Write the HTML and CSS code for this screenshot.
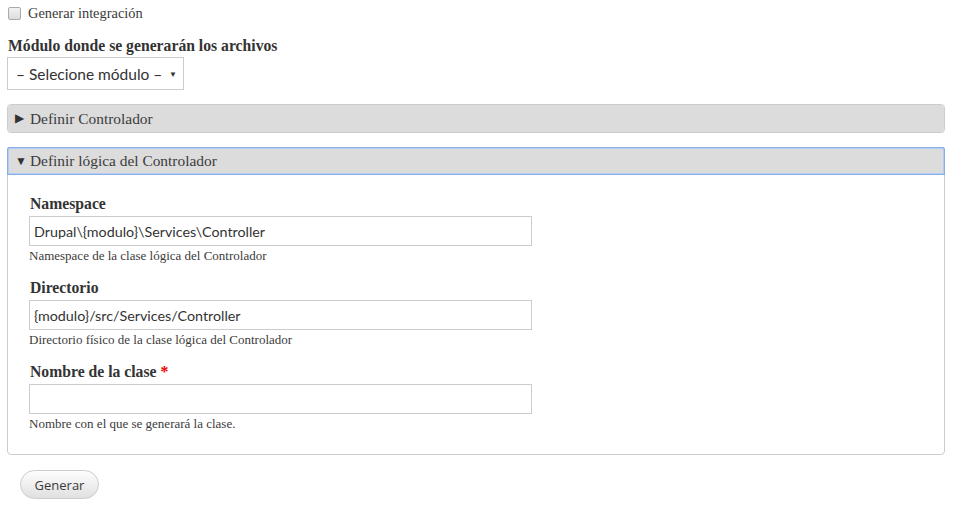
FILE: index.html
```html
<!DOCTYPE html>
<html lang="es">
<head>
<meta charset="utf-8">
<title>Generar integración</title>
<link rel="stylesheet" href="styles.css">
</head>
<body>
<form class="form">
  <div class="check-row">
    <span class="checkbox"></span>
    <span class="check-label">Generar integración</span>
  </div>

  <div class="field field-module">
    <label class="label">Módulo donde se generarán los archivos</label>
    <div class="select">
      <span>– Selecione módulo –</span>
      <span class="caret">▼</span>
    </div>
  </div>

  <div class="details closed">
    <div class="summary"><span class="tri">▶</span>Definir Controlador</div>
  </div>

  <div class="details open">
    <div class="summary focus"><span class="tri">▼</span>Definir lógica del Controlador</div>
    <div class="details-body">
      <div class="field">
        <label class="label">Namespace</label>
        <div class="input">Drupal\{modulo}\Services\Controller</div>
        <div class="desc">Namespace de la clase lógica del Controlador</div>
      </div>
      <div class="field">
        <label class="label">Directorio</label>
        <div class="input">{modulo}/src/Services/Controller</div>
        <div class="desc">Directorio físico de la clase lógica del Controlador</div>
      </div>
      <div class="field">
        <label class="label">Nombre de la clase <span class="req">*</span></label>
        <div class="input"></div>
        <div class="desc">Nombre con el que se generará la clase.</div>
      </div>
    </div>
  </div>

  <div class="actions">
    <button type="button" class="button">Generar</button>
  </div>
</form>
</body>
</html>
```

FILE: styles.css
```css
html, body {
  margin: 0;
  padding: 0;
  background: #fff;
}
body {
  font-family: "Liberation Serif", Georgia, serif;
  color: #3b3b3b;
}
.form {
  padding: 6px 20px 0 7px;
  width: 938px;
}
.check-row {
  display: flex;
  align-items: center;
  height: 14px;
  padding-left: 1px;
}
.checkbox {
  width: 11px;
  height: 11px;
  border: 1px solid #a9a9a9;
  border-radius: 2px;
  background: linear-gradient(#f2f2f2, #dcdcdc);
}
.check-label {
  margin-left: 7px;
  font-size: 14.4px;
  color: #3b3b3b;
}
.field-module {
  margin-top: 18px;
}
.label {
  display: block;
  font-weight: bold;
  font-size: 15.7px;
  line-height: 16px;
  color: #333;
  padding-left: 1px;
}
.select {
  margin-top: 3px;
  box-sizing: border-box;
  width: 177px;
  height: 33px;
  border: 1px solid #ccc;
  display: flex;
  align-items: center;
  justify-content: space-between;
  padding: 0 4px 0 8px;
  font-family: Lato, sans-serif;
  font-size: 15.5px;
  color: #333;
}
.caret {
  font-size: 8px;
  color: #333;
  margin-right: 2px;
}
.details {
  border: 1px solid #ccc;
  border-radius: 4px;
  margin-top: 14px;
}
.summary {
  background: #dcdcdc;
  height: 27px;
  display: flex;
  align-items: center;
  padding-left: 7px;
  font-size: 15.4px;
  color: #3b3b3b;
}
.details.closed .summary {
  border-radius: 3px;
}
.summary.focus {
  box-shadow: inset 0 0 0 1px #8aaee8, inset 0 0 0 2px #b5cdf2;
  margin: -1px -1px 0 -1px;
  height: 28px;
  padding-left: 8px;
  border-radius: 3px 3px 0 0;
}
.tri {
  font-size: 12px;
  margin-right: 6px;
  color: #333;
  width: 9px;
  display: inline-block;
}
.details-body {
  padding: 21px 21px 23px 21px;
}
.field + .field {
  margin-top: 17px;
}
.input {
  box-sizing: border-box;
  width: 503px;
  height: 30px;
  border: 1px solid #ccc;
  margin-top: 4px;
  padding: 0 4px;
  display: flex;
  align-items: center;
  font-family: Lato, sans-serif;
  font-size: 14.3px;
  color: #333;
}
.desc {
  font-size: 13px;
  margin-top: 3px;
  color: #3b3b3b;
  line-height: 14px;
}
.req {
  color: #e00;
}
.actions {
  padding: 15px 0 0 13px;
}
.button {
  width: 79px;
  height: 29px;
  border: 1px solid #ccc;
  border-radius: 15px;
  background: linear-gradient(#fefefe, #e0e0e0);
  font-family: "Open Sans", sans-serif;
  font-size: 13px;
  color: #3a3a3a;
  padding: 0;
}
```
